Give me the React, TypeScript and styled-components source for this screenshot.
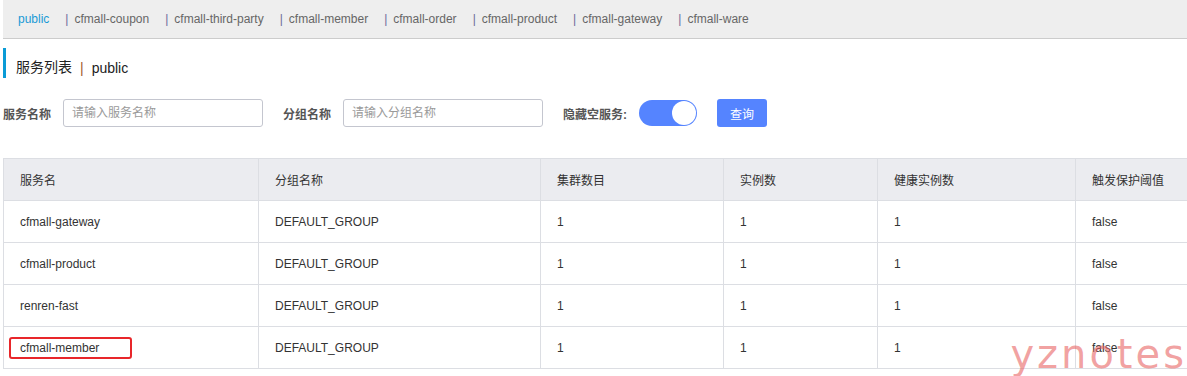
import React from "react";
import styled, { createGlobalStyle } from "styled-components";

const GlobalStyle = createGlobalStyle`
  body {
    margin: 0;
    background: #fff;
    font-family: "Liberation Sans", "Noto Sans CJK SC", sans-serif;
    font-size: 12px;
    color: #333;
  }
`;

const namespaces = [
  "public",
  "cfmall-coupon",
  "cfmall-third-party",
  "cfmall-member",
  "cfmall-order",
  "cfmall-product",
  "cfmall-gateway",
  "cfmall-ware",
];

const columns = [
  { title: "服务名", width: 255 },
  { title: "分组名称", width: 282 },
  { title: "集群数目", width: 183 },
  { title: "实例数", width: 154 },
  { title: "健康实例数", width: 198 },
  { title: "触发保护阈值", width: 140 },
];

const rows = [
  { name: "cfmall-gateway" },
  { name: "cfmall-product" },
  { name: "renren-fast" },
  { name: "cfmall-member", marked: true },
];

const App: React.FC = () => (
  <Page>
    <GlobalStyle />
    <NamespaceBar>
      {namespaces.map((ns, i) => (
        <NamespaceItem key={ns} active={i === 0}>
          {i > 0 && <Sep>|</Sep>}
          {ns}
        </NamespaceItem>
      ))}
    </NamespaceBar>

    <PageTitle>
      服务列表
      <TitleSep>|</TitleSep>
      public
    </PageTitle>

    <SearchForm>
      <FieldLabel>服务名称</FieldLabel>
      <TextInput placeholder="请输入服务名称" />
      <FieldLabel>分组名称</FieldLabel>
      <TextInput placeholder="请输入分组名称" />
      <FieldLabel>隐藏空服务:</FieldLabel>
      <Switch>
        <SwitchKnob />
      </Switch>
      <QueryButton>查询</QueryButton>
    </SearchForm>

    <TableWrap>
      <Table>
        <colgroup>
          {columns.map((c) => (
            <col key={c.title} style={{ width: c.width }} />
          ))}
        </colgroup>
        <thead>
          <tr>
            {columns.map((c) => (
              <HeadCell key={c.title}>{c.title}</HeadCell>
            ))}
          </tr>
        </thead>
        <tbody>
          {rows.map((r) => (
            <tr key={r.name}>
              <Cell>
                <NameText marked={r.marked}>{r.name}</NameText>
              </Cell>
              <Cell>DEFAULT_GROUP</Cell>
              <Cell>1</Cell>
              <Cell>1</Cell>
              <Cell>1</Cell>
              <Cell>false</Cell>
            </tr>
          ))}
        </tbody>
      </Table>
      <Watermark>yznotes</Watermark>
    </TableWrap>
  </Page>
);

const Page = styled.div`
  width: 1187px;
  height: 376px;
  overflow: hidden;
  position: relative;
`;

const NamespaceBar = styled.div`
  display: flex;
  align-items: center;
  gap: 16px;
  height: 38px;
  padding-left: 15px;
  margin-left: 3px;
  background: #eeeeee;
  border-bottom: 1px solid #cccccc;
`;

const NamespaceItem = styled.span<{ active?: boolean }>`
  color: ${({ active }) => (active ? "#1a9bd6" : "#666666")};
  white-space: nowrap;
`;

const Sep = styled.span`
  color: #6b6b9a;
  margin-right: 6px;
`;

const PageTitle = styled.div`
  display: flex;
  align-items: flex-end;
  box-sizing: border-box;
  height: 30px;
  margin: 9px 0 0 3px;
  padding: 0 0 2px 10px;
  border-left: 3px solid #0a9bd6;
  font-size: 14px;
  color: #222;
`;

const TitleSep = styled.span`
  color: #a05a2c;
  margin: 0 8px;
`;

const SearchForm = styled.div`
  display: flex;
  align-items: center;
  height: 28px;
  margin: 21px 0 0 3px;
`;

const FieldLabel = styled.label`
  font-weight: 700;
  color: #555;
  margin-right: 12px;
  white-space: nowrap;
`;

const TextInput = styled.input`
  box-sizing: border-box;
  width: 200px;
  height: 28px;
  padding: 0 8px;
  margin-right: 20px;
  border: 1px solid #c4c6cf;
  border-radius: 3px;
  font-family: inherit;
  font-size: 12px;
  outline: none;

  &::placeholder {
    color: #9a9a9a;
  }
`;

const Switch = styled.div`
  box-sizing: border-box;
  display: flex;
  justify-content: flex-end;
  align-items: center;
  width: 58px;
  height: 26px;
  padding: 1px;
  margin-right: 20px;
  border-radius: 13px;
  background: #5584ff;
`;

const SwitchKnob = styled.div`
  width: 24px;
  height: 24px;
  border-radius: 50%;
  background: #fff;
`;

const QueryButton = styled.button`
  width: 50px;
  height: 28px;
  border: none;
  border-radius: 3px;
  background: #5584ff;
  color: #fff;
  font-family: inherit;
  font-size: 12px;
  padding: 0;
`;

const TableWrap = styled.div`
  position: relative;
  margin: 31px 0 0 3px;
`;

const Table = styled.table`
  border-collapse: collapse;
  table-layout: fixed;
  width: 1212px;
`;

const HeadCell = styled.th`
  height: 41px;
  padding: 0 16px;
  text-align: left;
  font-weight: 400;
  color: #333;
  background: #ebecf0;
  border: 1px solid #dcdee3;
`;

const Cell = styled.td`
  height: 41px;
  padding: 0 16px;
  color: #333;
  border: 1px solid #dcdee3;
  white-space: nowrap;
`;

const NameText = styled.span<{ marked?: boolean }>`
  display: inline-block;
  ${({ marked }) =>
    marked &&
    `
    margin-left: -11px;
    padding: 2px 31px 2px 9px;
    border: 2px solid #e8262a;
    border-radius: 3px;
  `}
`;

const Watermark = styled.div`
  position: absolute;
  right: 0;
  bottom: -8px;
  font-family: "DejaVu Sans", sans-serif;
  font-size: 40px;
  letter-spacing: 3px;
  color: rgba(232, 100, 100, 0.6);
  pointer-events: none;
`;

export default App;
